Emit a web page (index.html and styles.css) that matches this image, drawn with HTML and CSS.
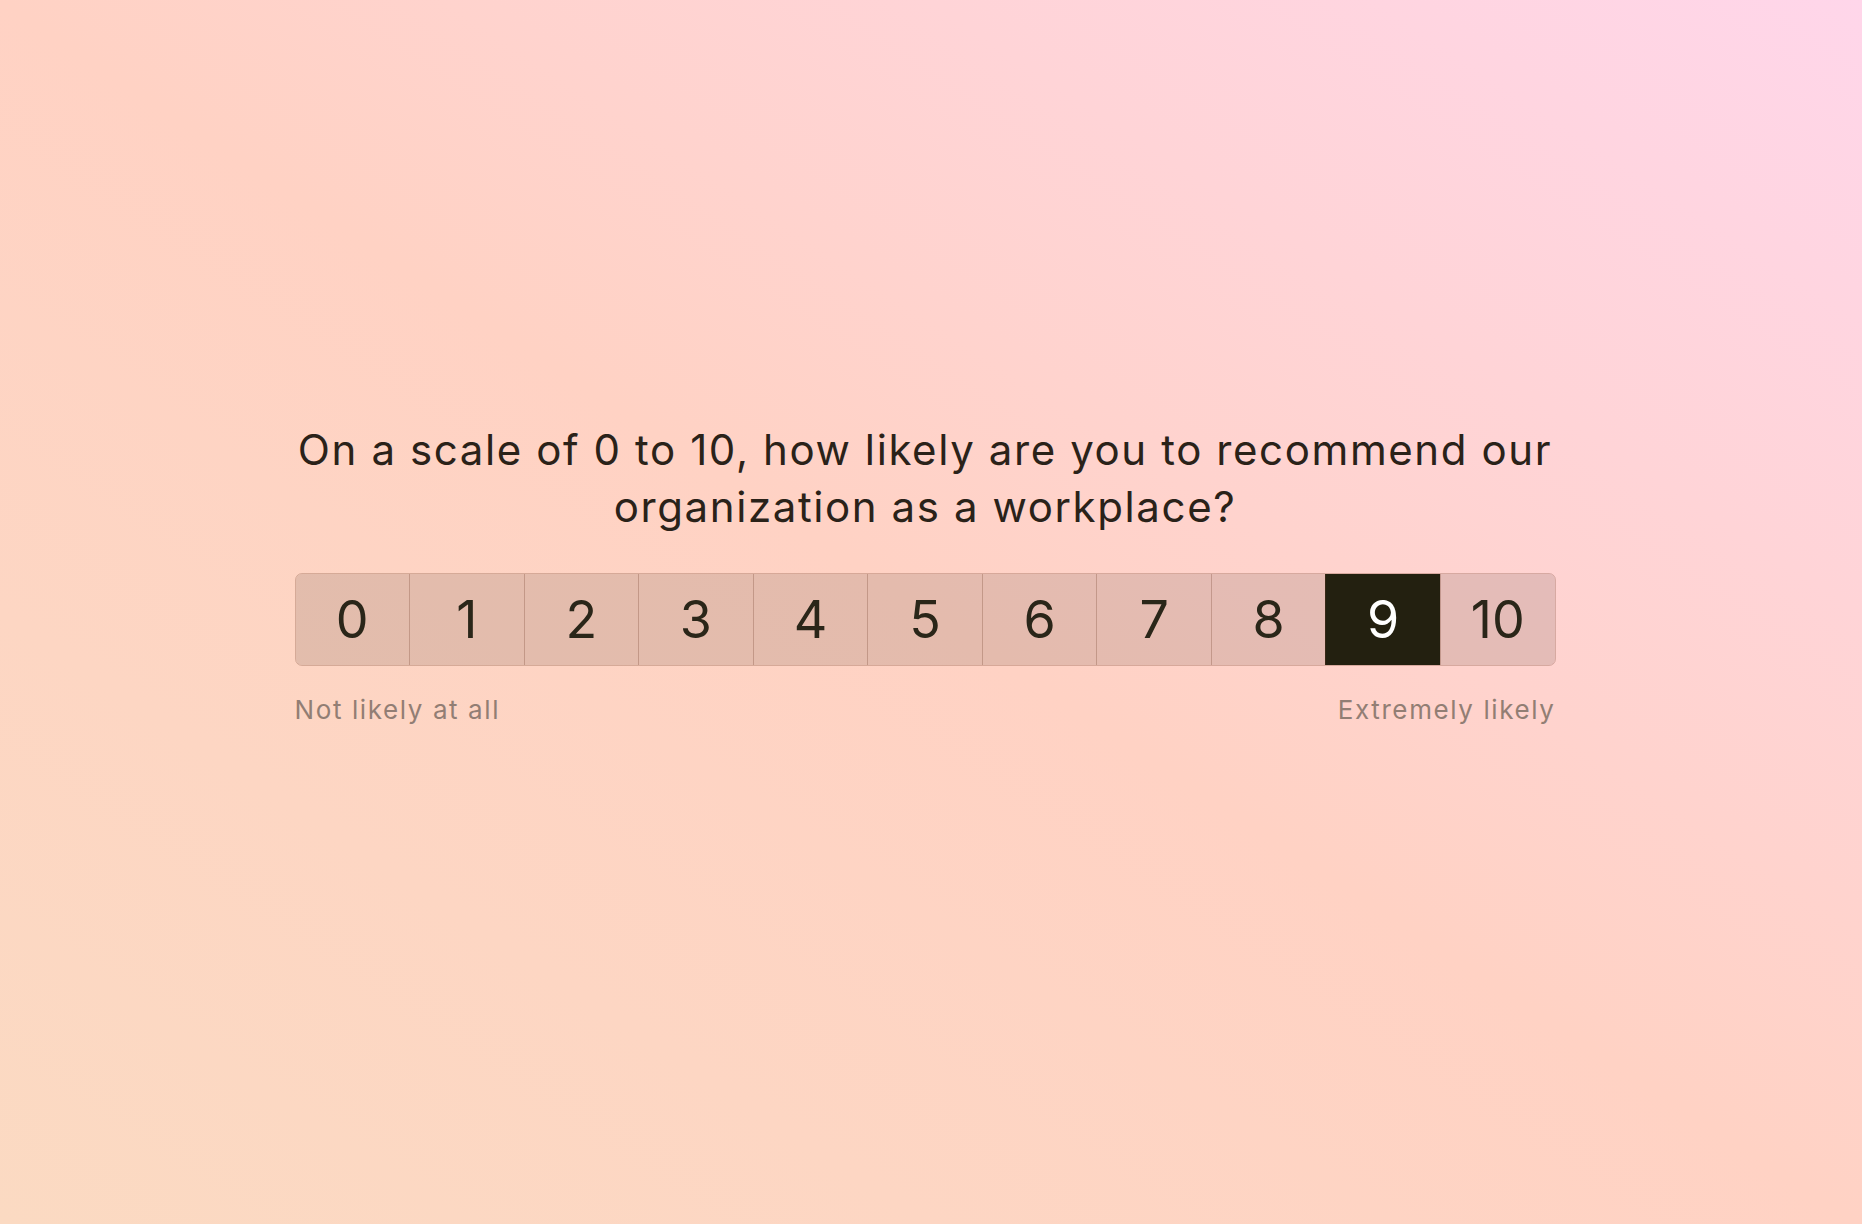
FILE: index.html
```html
<!DOCTYPE html>
<html lang="en">
<head>
    <meta charset="UTF-8">
    <link rel="stylesheet" href="styles.css">
</head>
<body>
    <div class="survey">
        <h1 class="question">On a scale of 0 to 10, how likely are you to recommend our organization as a workplace?</h1>

        <div class="scale">
            <button class="score">0</button>
            <button class="score">1</button>
            <button class="score">2</button>
            <button class="score">3</button>
            <button class="score">4</button>
            <button class="score">5</button>
            <button class="score">6</button>
            <button class="score">7</button>
            <button class="score">8</button>
            <button class="score selected">9</button>
            <button class="score">10</button>
        </div>

        <div class="scale-labels">
            <span>Not likely at all</span>
            <span>Extremely likely</span>
        </div>
    </div>
</body>
</html>
```

FILE: styles.css
```css
body {
    margin: 0;
    padding: 0 12px 0 0;
    min-height: 100vh;
    font-family: 'Inter', 'Noto Sans', sans-serif;
    color: #2a2219;
    background: linear-gradient(to top right, #fbdac2 0%, #ffd2c4 50%, #ffd6ea 100%);
    overflow: hidden;
}

.survey {
    width: 1261px;
    margin: 0 auto;
    padding-top: 421px;
}

.question {
    margin: 0 -20px;
    font-size: 42px;
    font-weight: 400;
    line-height: 57px;
    text-align: center;
    letter-spacing: 1.6px;
}

.scale {
    display: flex;
    margin-top: 38px;
    height: 93px;
    border: 1px solid rgba(110, 60, 40, 0.28);
    border-radius: 7px;
    overflow: hidden;
    box-sizing: border-box;
}

.score {
    flex: 1;
    border: none;
    border-left: 1px solid rgba(110, 60, 40, 0.28);
    background: rgba(20, 10, 0, 0.115);
    font-family: inherit;
    font-size: 52px;
    font-weight: 400;
    color: #2a2619;
    padding: 0;
    cursor: pointer;
}

.score:first-child {
    border-left: none;
}

.score.selected {
    background: #232010;
    color: #fff;
}

.scale-labels {
    display: flex;
    justify-content: space-between;
    margin-top: 26px;
    font-size: 26px;
    line-height: 36px;
    letter-spacing: 1.6px;
    color: #927e74;
}
```
